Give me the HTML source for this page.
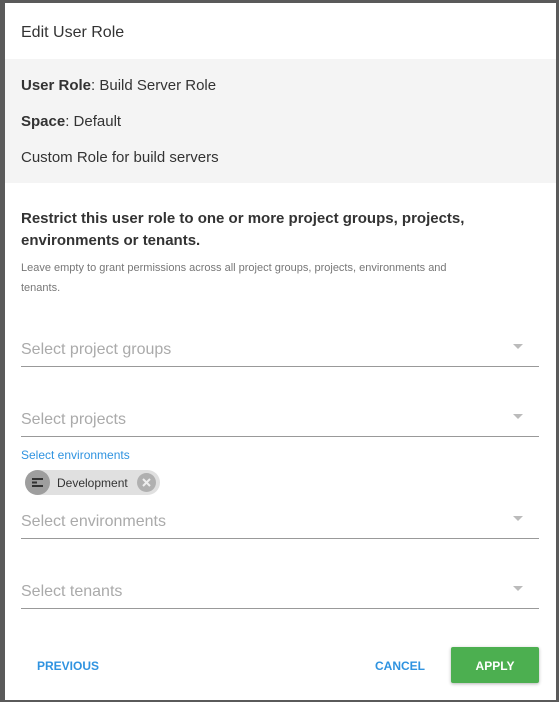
<!DOCTYPE html>
<html><head><style>
body{margin:0;width:559px;height:702px;background:#5a5a5a;font-family:"Liberation Sans",Roboto,sans-serif;position:relative;overflow:hidden;color:#333}
.dlg{position:absolute;left:5px;top:3px;width:551px;height:697px;background:#fff}
.t{position:absolute;left:16px;top:21px;font-size:16px;color:#333}
.info{position:absolute;left:0;top:56px;width:551px;height:124px;background:#f4f4f4;font-size:15px;color:#333}
.info div{position:absolute;left:16px}
.h{position:absolute;left:16px;top:205px;width:500px;font-size:15px;font-weight:bold;line-height:22px;color:#333}
.s{position:absolute;left:16px;top:255px;width:462px;font-size:11px;line-height:20px;color:#777}
.f{position:absolute;left:16px;width:518px;border-bottom:1px solid #999;height:28px;font-size:16px;color:#aaa}
.f span{position:absolute;top:3px;left:0}
.f i{position:absolute;right:16px;top:6px;border-left:5px solid transparent;border-right:5px solid transparent;border-top:5px solid #bbb}
.lab{position:absolute;left:16px;top:445px;font-size:12px;color:#2f93e0}
.chip{position:absolute;left:20px;top:467px;width:135px;height:25px;background:#e0e0e0;border-radius:13px;font-size:12px;color:#333}
.b{position:absolute;font-size:12px;font-weight:bold;color:#2f93e0}
</style></head><body>
<div class="dlg">
<div class="t">Edit User Role</div>
<div class="info">
<div style="top:18px"><b>User Role</b>: Build Server Role</div>
<div style="top:54px"><b>Space</b>: Default</div>
<div style="top:90px">Custom Role for build servers</div>
</div>
<div class="h">Restrict this user role to one or more project groups, projects, environments or tenants.</div>
<div class="s">Leave empty to grant permissions across all project groups, projects, environments and tenants.</div>
<div class="f" style="top:335px"><span>Select project groups</span><i></i></div>
<div class="f" style="top:405px"><span>Select projects</span><i></i></div>
<div class="lab">Select environments</div>
<div class="chip">
<div style="position:absolute;left:0;top:0;width:25px;height:25px;border-radius:50%;background:#9e9e9e"><svg width="25" height="25"><g fill="#333"><rect x="7" y="8" width="11" height="2"/><rect x="7" y="11.5" width="5" height="2"/><rect x="7" y="15" width="11" height="2"/></g></svg></div>
<span style="position:absolute;left:32px;top:6px">Development</span>
<div style="position:absolute;right:4px;top:3px;width:19px;height:19px;border-radius:50%;background:#b0b0b0"><svg width="19" height="19"><path d="M6 6L13 13M13 6L6 13" stroke="#eee" stroke-width="2"/></svg></div>
</div>
<div class="f" style="top:507px"><span>Select environments</span><i></i></div>
<div class="f" style="top:577px"><span>Select tenants</span><i></i></div>
<div class="b" style="left:32px;top:656px">PREVIOUS</div>
<div class="b" style="left:370px;top:656px">CANCEL</div>
<div style="position:absolute;left:446px;top:644px;width:88px;height:36px;background:#4caf50;border-radius:2px;box-shadow:0 1px 3px rgba(0,0,0,.3);color:#fff;font-size:12px;font-weight:bold;text-align:center;line-height:38px">APPLY</div>
</div>
</body></html>
